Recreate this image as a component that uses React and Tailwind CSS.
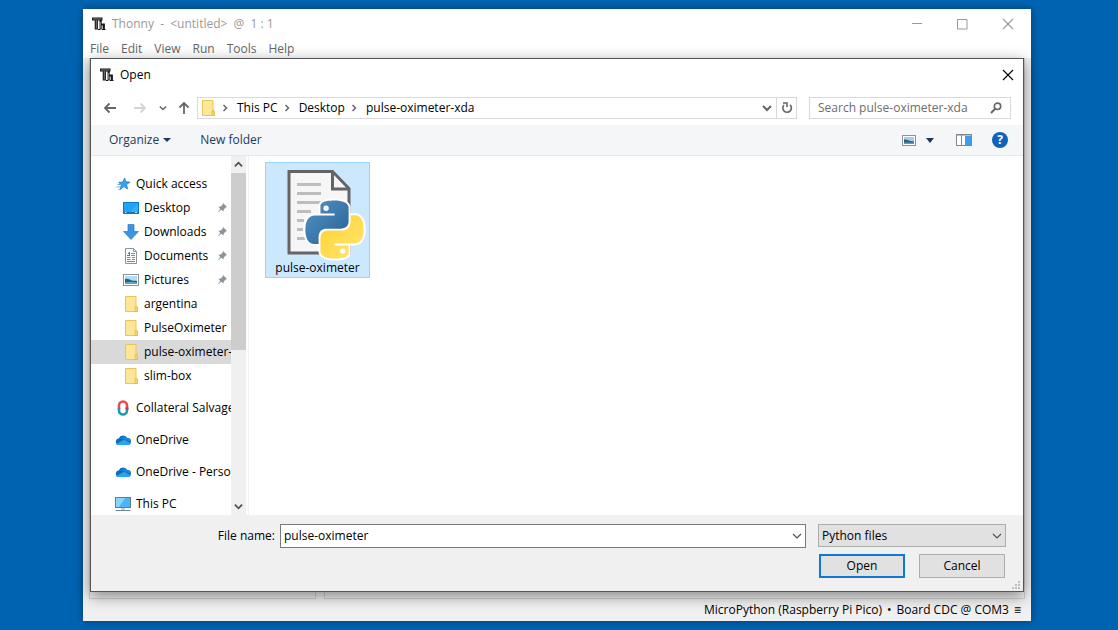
import React, { useState } from "react";

const MENUS = ["File", "Edit", "View", "Run", "Tools", "Help"];

const QUICK = [
  { label: "Desktop", icon: DesktopIcon, pinned: true },
  { label: "Downloads", icon: DownloadIcon, pinned: true },
  { label: "Documents", icon: DocumentIcon, pinned: true },
  { label: "Pictures", icon: PictureIcon, pinned: true },
  { label: "argentina", icon: FolderIcon },
  { label: "PulseOximeter", icon: FolderIcon },
  { label: "pulse-oximeter-xda", icon: FolderIcon },
  { label: "slim-box", icon: FolderIcon },
];

const ROOTS = [
  { label: "Collateral Salvage", icon: SalvageIcon },
  { label: "OneDrive", icon: CloudIcon },
  { label: "OneDrive - Personal", icon: CloudIcon },
  { label: "This PC", icon: PcIcon },
];

function ThonnyLogo() {
  return (
    <svg width="14" height="14" viewBox="0 0 14 14" fill="none" className="shrink-0">
      <path d="M0 2h10.500M4.300 2v10.500" stroke="#161616" strokeWidth="3.2" />
      <path d="M8.600 2v10.500M8.600 7.500h3.200v5" stroke="#161616" strokeWidth="2.2" />
      <path d="M1 2h8.500M4.300 3v8.500M8.600 5v6.500" stroke="#8c8c8c" strokeWidth="0.9" />
      <path d="M6.700 5v7" stroke="#fff" strokeWidth="0.9" />
      <path d="M10 12.500h3.500M6 12.500h2" stroke="#161616" strokeWidth="1.200" />
    </svg>
  );
}

function CloseIcon() {
  return (
    <svg width="12" height="12" viewBox="0 0 12 12" stroke="currentColor" strokeWidth="1.1">
      <path d="M1 1l10 10M11 1L1 11" />
    </svg>
  );
}

function Chevron({ dir = "down", size = 10, width = 2 }) {
  const paths = {
    down: "M1 3l4 4 4-4",
    up: "M1 7l4-4 4 4",
    right: "M3.5 2l3 3-3 3",
  };
  return (
    <svg width={size} height={size} viewBox="0 0 10 10" fill="none" stroke="currentColor" strokeWidth={width} className="shrink-0">
      <path d={paths[dir]} />
    </svg>
  );
}

function Arrow({ dir }) {
  const paths = {
    left: "M13 7H2M6.500 2.500L2 7l4.500 4.500",
    right: "M1 7h11M7.500 2.500L12 7l-4.500 4.500",
    up: "M7 13V2M2.500 6.500L7 2l4.500 4.500",
  };
  return (
    <svg width="14" height="14" viewBox="0 0 14 14" fill="none" stroke="currentColor" strokeWidth="1.8">
      <path d={paths[dir]} />
    </svg>
  );
}

function FolderIcon() {
  return (
    <svg width="16" height="16" viewBox="0 0 16 16" className="shrink-0">
      <path d="M2.500 .5h10.500v10l1.300 .6v4.400H2.500z" fill="#ffe596" stroke="#e8c65c" />
      <path d="M12 15.500v-4.500l1-1 1.300 1v4.500z" fill="#fbd768" stroke="#dfb73e" strokeWidth="0.8" />
    </svg>
  );
}

function StarIcon() {
  return (
    <svg width="16" height="16" viewBox="0 0 16 16" className="shrink-0">
      <path d="M9.700 2l1 3.800 4.300.3-3.500 2.500 1.100 4.300-3.700-2.300-3.800 3 1.300-4.700-2.700-2.500 4.100-.4z" fill="#35a3ee" stroke="#1b7fcb" strokeWidth="0.8" />
      <path d="M2.500 8.500h3M1.500 11h4M3.500 13.500h1.500" stroke="#4aa8e8" strokeWidth="0.9" />
    </svg>
  );
}

function DesktopIcon() {
  return (
    <svg width="16" height="16" viewBox="0 0 16 16" className="shrink-0">
      <rect x="0.500" y="2.500" width="15" height="11" fill="#1fa4fa" stroke="#0b78c9" />
      <path d="M6 13L15 4v9z" fill="#35b2ff" />
      <path d="M1 12.500h14" stroke="#0f6db5" />
      <path d="M2 12.500h1.500M12 12.500h2" stroke="#bfe5ff" />
    </svg>
  );
}

function DownloadIcon() {
  return (
    <svg width="16" height="16" viewBox="0 0 16 16" className="shrink-0">
      <path d="M5 .5h6v7h4.500L8 15.500.500 7.500H5z" fill="#3b94e0" stroke="#2a7bc6" strokeWidth="0.7" />
    </svg>
  );
}

function DocumentIcon() {
  return (
    <svg width="16" height="16" viewBox="0 0 16 16" fill="none" className="shrink-0">
      <path d="M2.500 .5h8l3 3v12h-11z" fill="#fff" stroke="#8c9399" />
      <path d="M10.500 .5v3h3" stroke="#8c9399" />
      <path d="M8 5.500h4M8 7.500h4M4 9.500h3.500M9 9.500h3M4 11.500h3.500M9 11.500h3M4 13.500h8" stroke="#3f9ad9" />
      <path d="M4 7.500h3M5 6l1.500-2v3.500" stroke="#2a86c8" />
    </svg>
  );
}

function PictureIcon() {
  return (
    <svg width="16" height="14" viewBox="0 0 16 14" className="shrink-0">
      <rect x="0.500" y="1.500" width="15" height="11" fill="#fff" stroke="#8b9299" />
      <rect x="2" y="3" width="12" height="8" fill="#b4daf5" />
      <path d="M2 6c3-1 5 1 7 1.500s3 0 5 .5v2H2z" fill="#2c6270" />
      <path d="M2 9.500c4-1 8-1 12 0V11H2z" fill="#5aa4d6" />
    </svg>
  );
}

function SalvageIcon() {
  return (
    <svg width="16" height="16" viewBox="0 0 16 16" fill="none" strokeWidth="2.600" className="shrink-0">
      <path d="M4 9V5.500a4 4 0 0 1 8 0V9" stroke="#ee4b50" />
      <path d="M4 8v2.500a4 4 0 0 0 8 0V8" stroke="#1e9ba6" />
      <path d="M12 7v3" stroke="#b2454f" />
    </svg>
  );
}

function CloudIcon() {
  return (
    <svg width="16" height="12" viewBox="0 0 16 12" className="shrink-0">
      <path d="M3.500 11A3.300 3.300 0 0 1 3.700 4.500 4.800 4.800 0 0 1 12.400 4 3.500 3.500 0 0 1 12.500 11z" fill="#0f6cbd" />
      <path d="M6 4.200A4.800 4.800 0 0 1 12.400 4 3.500 3.500 0 0 1 15.800 8z" fill="#1a86d9" />
      <path d="M1.200 10L9 5.800l6.600 3.400A3 3 0 0 1 12.800 11H3.500a3.300 3.300 0 0 1-2.300-1z" fill="#2aa5ee" />
    </svg>
  );
}

function PcIcon() {
  return (
    <svg width="16" height="16" viewBox="0 0 16 16" className="shrink-0">
      <rect x="0.500" y="1.500" width="15" height="10" fill="#4db5f3" stroke="#5c7f99" />
      <path d="M1 2h9L4 11H1z" fill="#8ad4fb" />
      <path d="M6 12h4v2H6z" fill="#c5d0d8" />
      <path d="M0.500 14.500h15" stroke="#71889a" />
    </svg>
  );
}

function PinIcon() {
  return (
    <svg width="10" height="10" viewBox="0 0 10 10" className="shrink-0">
      <path d="M6 0l4 4-1.300.4-1.900 2L6.500 8.500 4.300 6.800.5 9.800 3.200 5.900 1.500 3.700l2.300-.3 1.900-2z" fill="#8a949c" />
    </svg>
  );
}

const PY_TOP =
  "M14.25.18l.9.2.73.26.59.3.45.32.34.34.25.34.16.33.1.3.04.26.02.2-.01.13V8.5l-.05.63-.13.55-.21.46-.26.38-.3.31-.33.25-.35.19-.35.14-.33.1-.3.07-.26.04-.21.02H8.77l-.69.05-.59.14-.5.22-.41.27-.33.32-.27.35-.2.36-.15.37-.1.35-.07.32-.04.27-.02.21v3.06H3.17l-.21-.03-.28-.07-.32-.12-.35-.18-.36-.26-.36-.36-.35-.46-.32-.59-.28-.73-.21-.88-.14-1.05-.05-1.23.06-1.22.16-1.04.24-.87.32-.71.36-.57.4-.44.42-.33.42-.24.4-.16.36-.1.32-.05.24-.01h.16l.06.01h8.16v-.83H6.18l-.01-2.75-.02-.37.05-.34.11-.31.17-.28.25-.26.31-.23.38-.2.44-.18.51-.15.58-.12.64-.1.71-.06.77-.04.84-.02 1.27.05z";
const PY_BOTTOM =
  "M21.04 6.11l.28.06.32.12.35.18.36.27.36.35.35.47.32.59.28.73.21.88.14 1.04.05 1.23-.06 1.23-.16 1.04-.24.86-.32.71-.36.57-.4.45-.42.33-.42.24-.4.16-.36.09-.32.05-.24.02-.16-.01h-8.22v.82h5.84l.01 2.76.02.36-.05.34-.11.31-.17.29-.25.25-.31.24-.38.2-.44.17-.51.15-.58.13-.64.09-.71.07-.77.04-.84.01-1.27-.04-1.07-.14-.9-.2-.73-.25-.59-.3-.45-.33-.34-.34-.25-.34-.16-.33-.1-.3-.04-.25-.02-.2.01-.13v-5.34l.05-.64.13-.54.21-.46.26-.38.3-.32.33-.24.35-.2.35-.14.33-.1.3-.06.26-.04.21-.02.13-.01h5.84l.69-.05.59-.14.5-.21.41-.28.33-.32.27-.35.2-.36.15-.36.1-.35.07-.32.04-.28.02-.21V6.07h2.09l.14.01z";

function PythonFile() {
  return (
    <svg width="96" height="96" viewBox="1 0 96 96" fill="none">
      <defs>
        <linearGradient id="pyBlue" x1="0" y1="0" x2="1" y2="1">
          <stop offset="0" stopColor="#5295c9" />
          <stop offset="1" stopColor="#2a5f8f" />
        </linearGradient>
        <linearGradient id="pyYellow" x1="0" y1="0" x2="1" y2="1">
          <stop offset="0" stopColor="#ffd02e" />
          <stop offset="1" stopColor="#ffe873" />
        </linearGradient>
      </defs>
      <path d="M20 5.500h43.500l16.500 17v64.500H20z" fill="#f6f6f6" stroke="#646464" strokeWidth="3" />
      <path d="M63.500 5v18H80" stroke="#646464" strokeWidth="3" />
      <path d="M28 18.500h24M28 27.500h24M28 36.500h24M28 45.500h14M28 54.500h7M28 63.500h6M28 72.500h8" stroke="#bdbdbd" strokeWidth="3" />
      <g transform="translate(36.500 34.500) scale(2.420)">
        <g fill="#fff" stroke="#fff" strokeWidth="1.600" strokeLinejoin="round">
          <path d={PY_TOP} />
          <path d={PY_BOTTOM} />
        </g>
        <path d={PY_TOP} fill="url(#pyBlue)" />
        <path d={PY_BOTTOM} fill="url(#pyYellow)" />
        <circle cx="8.500" cy="3.200" r="1.100" fill="#fff" />
        <circle cx="15.400" cy="20.900" r="1.100" fill="#fff" />
      </g>
    </svg>
  );
}

function SideItem({ item, nested, selected, onClick }) {
  const Icon = item.icon;
  return (
    <button
      onClick={onClick}
      className={`flex h-6 w-full shrink-0 items-center gap-[5px] overflow-hidden text-left ${nested ? "pl-8" : "pl-6"} ${selected ? "bg-[#d9d9d9]" : ""}`}
    >
      <Icon />
      <span className="whitespace-nowrap">{item.label}</span>
      {item.pinned && <span className="ml-auto pr-1"><PinIcon /></span>}
    </button>
  );
}

function Sidebar() {
  const [current, setCurrent] = useState("pulse-oximeter-xda");
  return (
    <nav className="flex w-[158px] shrink-0 border-r border-[#f0f0f0]">
      <div className="flex w-[140px] flex-col overflow-hidden pt-4">
        <SideItem item={{ label: "Quick access", icon: StarIcon }} />
        {QUICK.map((item) => (
          <SideItem key={item.label} item={item} nested selected={item.label === current} onClick={() => setCurrent(item.label)} />
        ))}
        <div className="mt-2 flex flex-col gap-2">
          {ROOTS.map((item) => (
            <SideItem key={item.label} item={item} />
          ))}
        </div>
      </div>
      <div className="flex w-[15px] flex-col items-center bg-[#f0f0f0] text-[#505050]">
        <div className="flex h-[17px] items-center"><Chevron dir="up" size={9} /></div>
        <div className="h-[177px] w-full bg-[#cdcdcd]" />
        <div className="mt-auto flex h-[17px] items-center"><Chevron size={9} /></div>
      </div>
    </nav>
  );
}

function Crumb({ children }) {
  return (
    <>
      <span className="ml-1 text-[#666]"><Chevron dir="right" width={1.5} /></span>
      <button className="ml-[7px]">{children}</button>
    </>
  );
}

function AddressBar() {
  return (
    <div className="flex h-[34px] shrink-0 items-center px-3 text-[#666]">
      <button aria-label="Back"><Arrow dir="left" /></button>
      <button aria-label="Forward" className="ml-4 text-[#d4d4d4]"><Arrow dir="right" /></button>
      <button aria-label="Recent" className="ml-3"><Chevron size={8} width={1.8} /></button>
      <button aria-label="Up" className="ml-[10px]"><Arrow dir="up" /></button>
      <div className="ml-[6px] flex h-[22px] flex-1 items-center border border-[#d9d9d9] pl-[2px] text-black">
        <FolderIcon />
        <Crumb>This PC</Crumb>
        <Crumb>Desktop</Crumb>
        <Crumb>pulse-oximeter-xda</Crumb>
        <button aria-label="Previous locations" className="mr-1 ml-auto text-[#666]"><Chevron /></button>
        <button aria-label="Refresh" className="flex h-full w-5 items-center justify-center border-l border-[#d9d9d9] text-[#666]">
          <svg width="12" height="12" viewBox="0 0 12 12" fill="none" stroke="currentColor" strokeWidth="1.6">
            <path d="M9 2.800A4.300 4.300 0 1 1 3 3M2 1h4v4" />
          </svg>
        </button>
      </div>
      <label className="ml-3 flex h-[22px] w-[202px] items-center border border-[#d9d9d9] px-2">
        <input aria-label="Search" placeholder="Search pulse-oximeter-xda" className="min-w-0 flex-1 outline-none placeholder:text-[#6d6d6d]" />
        <svg width="12" height="12" viewBox="0 0 12 12" fill="none" stroke="currentColor" strokeWidth="1.6">
          <circle cx="7.500" cy="4.300" r="3.200" />
          <path d="M5.200 6.700L1 11" strokeWidth="2" />
        </svg>
      </label>
    </div>
  );
}

function Toolbar() {
  return (
    <div className="flex h-[31px] shrink-0 items-center border-b border-[#e6e8eb] bg-[#f5f6f7] pr-[15px] pl-[18px] text-[#1e395b]">
      <button className="flex items-center gap-1">
        Organize
        <svg width="8" height="4" viewBox="0 0 8 4" fill="currentColor"><path d="M0 0h8L4 4z" /></svg>
      </button>
      <button className="ml-[29px]">New folder</button>
      <button aria-label="Change view" className="ml-auto">
        <svg width="14" height="11" viewBox="0 0 14 11">
          <rect x="0.500" y="0.500" width="13" height="10" fill="#fff" stroke="#8b9299" />
          <rect x="2" y="2" width="10" height="7" fill="#a9cbee" />
          <path d="M2 4.500c3-.5 4 1.500 10 2V8H2z" fill="#2c6270" />
          <path d="M2 7.500h10V9H2z" fill="#5a9bd0" />
        </svg>
      </button>
      <button aria-label="More views" className="ml-[10px]">
        <svg width="8" height="5" viewBox="0 0 8 5" fill="currentColor"><path d="M0 0h8L4 5z" /></svg>
      </button>
      <button aria-label="Preview pane" className="ml-[22px]">
        <svg width="16" height="12" viewBox="0 0 16 12">
          <rect x="0.500" y="0.500" width="15" height="11" fill="#fff" stroke="#7f8791" />
          <path d="M0 1h16M5.500 1v10" stroke="#7f8791" />
          <rect x="9" y="2" width="6" height="9" fill="#3f9cea" />
        </svg>
      </button>
      <button aria-label="Help" className="ml-5 flex size-4 items-center justify-center rounded-full bg-[#0f63b8] text-xs font-bold text-white">?</button>
    </div>
  );
}

function Footer() {
  const [name, setName] = useState("pulse-oximeter");
  return (
    <div className="relative flex h-[76px] shrink-0 flex-col bg-[#f0f0f0] pt-[9px] pr-[17px]">
      <div className="flex items-start">
        <label htmlFor="filename" className="w-[189px] pr-[5px] text-right leading-6">File name:</label>
        <div className="flex h-6 flex-1 items-center border border-[#7a7a7a] bg-white pr-[3px] pl-[3px]">
          <input id="filename" value={name} onChange={(e) => setName(e.target.value)} className="min-w-0 flex-1 outline-none" />
          <span className="text-[#505050]"><Chevron width={1.2} /></span>
        </div>
        <div className="relative ml-3 w-[188px]">
          <select aria-label="File type" className="block h-[23px] w-full appearance-none border border-[#adadad] bg-[#e1e1e1] pl-[3px]">
            <option>Python files</option>
          </select>
          <span className="pointer-events-none absolute inset-y-0 right-1 flex items-center text-[#505050]"><Chevron width={1.2} /></span>
        </div>
      </div>
      <div className="mt-[6px] mr-px flex justify-end gap-[14px]">
        <button className="h-6 w-[86px] border-2 border-[#0f78d4] bg-[#e1e1e1]">Open</button>
        <button className="h-6 w-[86px] border border-[#adadad] bg-[#e1e1e1]">Cancel</button>
      </div>
      <svg width="9" height="9" viewBox="0 0 9 9" fill="#bfbfbf" className="absolute right-[2px] bottom-[1px]">
        <path d="M6 0h2v2H6zM6 3h2v2H6zM6 6h2v2H6zM3 3h2v2H3zM3 6h2v2H3zM0 6h2v2H0z" />
      </svg>
    </div>
  );
}

function OpenDialog() {
  return (
    <section className="absolute inset-x-[7px] top-[49px] bottom-[29px] flex flex-col border border-[#555] bg-white shadow-[0_4px_14px_rgba(0,0,0,0.45)]">
      <header className="flex h-8 shrink-0 items-center gap-[6px] px-[9px]">
        <ThonnyLogo />
        <h2>Open</h2>
        <button aria-label="Close dialog" className="ml-auto"><CloseIcon /></button>
      </header>
      <AddressBar />
      <Toolbar />
      <div className="flex min-h-0 flex-1">
        <Sidebar />
        <div className="flex-1 pt-[6px] pl-4">
          <button className="flex h-[116px] w-[105px] flex-col items-center border border-[#99d1ff] bg-[#cce8ff] pt-[3px]">
            <PythonFile />
            <span className="leading-3">pulse-oximeter</span>
          </button>
        </div>
      </div>
      <Footer />
    </section>
  );
}

export default function App() {
  return (
    <div className="flex min-h-screen bg-[#0063b1] py-[9px] pr-[87px] pl-[83px] font-['Open_Sans','Noto_Sans',sans-serif] text-xs text-black">
      <main className="relative flex flex-1 flex-col bg-[#f0f0f0] shadow-[0_0_8px_rgba(0,0,0,0.4)]">
        <header className="flex h-[30px] items-center bg-white pr-[17px] pl-[9px] text-[#999]">
          <ThonnyLogo />
          <h1 className="ml-[6px] whitespace-pre">{"Thonny  -  <untitled>  @  1 : 1"}</h1>
          <button aria-label="Minimize" className="ml-auto">
            <svg width="10" height="10" viewBox="0 0 10 10" stroke="currentColor"><path d="M0 4.500h10" /></svg>
          </button>
          <button aria-label="Maximize" className="ml-[35px]">
            <svg width="11" height="11" viewBox="0 0 11 11" fill="none" stroke="currentColor"><path d="M.5 .5h9.500v9.500H.5z" /></svg>
          </button>
          <button aria-label="Close" className="ml-[34px]"><CloseIcon /></button>
        </header>
        <nav className="flex h-[19px] items-center gap-3 bg-white pl-[7px] text-[#666]">
          {MENUS.map((m) => <button key={m}>{m}</button>)}
        </nav>
        <div className="mx-[6px] flex flex-1 gap-2">
          <div className="w-[227px] border border-[#d0d0d0]" />
          <div className="flex-1 border border-[#d0d0d0]" />
        </div>
        <footer className="flex h-[22px] items-center justify-end gap-[5px] pr-[10px]">
          <span>MicroPython (Raspberry Pi Pico)</span>
          <span>•</span>
          <button>Board CDC @ COM3</button>
          <button aria-label="Interpreter options">≡</button>
        </footer>
        <OpenDialog />
      </main>
    </div>
  );
}
